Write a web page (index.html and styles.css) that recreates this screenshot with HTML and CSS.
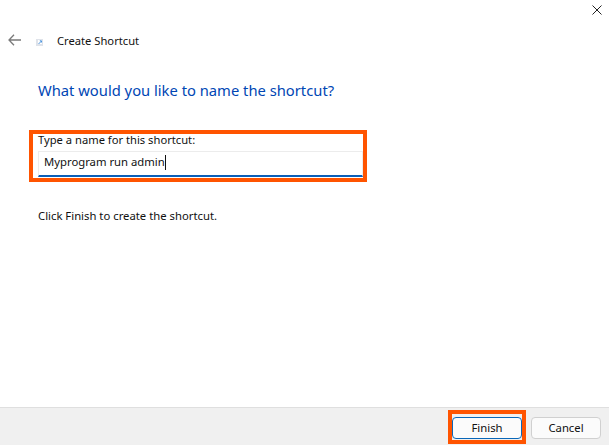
FILE: index.html
```html
<!DOCTYPE html>
<html lang="en">
<head>
<meta charset="utf-8">
<title>Create Shortcut</title>
<link rel="stylesheet" href="styles.css">
</head>
<body>
<div class="window">
  <div class="titlebar">
    <svg class="close" width="10" height="10" viewBox="0 0 10 10"><path d="M.5.5l9 9M9.500.5l-9 9" stroke="#222" stroke-width="1" fill="none"/></svg>
  </div>
  <div class="nav">
    <svg class="back" width="13" height="12" viewBox="0 0 13 12"><path d="M6 .8L1 6l5 5.200M1 6h12" stroke="#7a7a7a" stroke-width="1.300" fill="none"/></svg>
    <svg class="app-icon" width="7" height="7" viewBox="0 0 7 7"><rect width="7" height="7" fill="#dfe3ea"/><rect x="2" y="1" width="4" height="4" fill="#fff"/><path d="M2.500 5L5.500 2M3.800 1.800H5.500V3.500" stroke="#4a93dc" stroke-width="1" fill="none"/></svg>
    <span class="nav-title">Create Shortcut</span>
  </div>
  <main class="content">
    <h1 class="heading">What would you like to name the shortcut?</h1>
    <div class="field">
      <label class="label" for="name">Type a name for this shortcut:</label>
      <div class="input"><span class="value">Myprogram run admin</span><span class="caret"></span></div>
      <div class="mark mark-field"></div>
    </div>
    <p class="hint">Click Finish to create the shortcut.</p>
  </main>
  <footer class="footer">
    <div class="btn-wrap">
      <button class="btn btn-primary">Finish</button>
      <div class="mark mark-btn"></div>
    </div>
    <button class="btn">Cancel</button>
  </footer>
</div>
</body>
</html>
```
FILE: styles.css
```css
* { box-sizing: border-box; }
html, body { margin: 0; padding: 0; }
body { font-family: "Noto Sans", "Open Sans", sans-serif; color: #111; background: #fff; }
.window { width: 609px; height: 445px; display: flex; flex-direction: column; overflow: hidden; }
.titlebar { height: 31px; display: flex; justify-content: flex-end; padding: 5px 7px 0 0; }
.close { display: block; }
.nav { height: 20px; display: flex; align-items: center; padding-left: 8px; }
.back { display: block; margin-top: -2px; }
.app-icon { display: block; margin: 3px 0 0 15px; }
.nav-title { font-size: 11.200px; line-height: 20px; margin-left: 14px; }
.content { flex: 1; padding: 0 0 0 38px; }
.heading { margin: 27px 0 0; font-size: 14.750px; line-height: 24px; font-weight: 400; color: #0046b4; white-space: nowrap; }
.field { position: relative; width: 325px; margin-top: 30px; }
.label { display: block; font-size: 11.200px; line-height: 16px; margin-bottom: 3px; }
.input { height: 26px; padding: 0 0 3px 5px; display: flex; align-items: center; border: 1px solid #ececec; border-bottom: 2px solid #0a5fb8; background: #fff; }
.value { font-size: 11.300px; line-height: 20px; }
.caret { width: 1px; height: 15px; background: #111; }
.mark { position: absolute; border: 4px solid #ff5400; pointer-events: none; }
.mark-field { left: -9px; top: -2px; width: 338px; height: 52px; }
.hint { margin: 31px 0 0; font-size: 11.300px; line-height: 16px; }
.footer { height: 38px; display: flex; justify-content: flex-end; align-items: flex-start; gap: 9px; padding: 9px 8px 0 0; background: #f0f0f0; border-top: 1px solid #dfdfdf; }
.btn-wrap { position: relative; display: flex; }
.btn { width: 70px; height: 22px; padding: 0; font-family: inherit; font-size: 11.300px; line-height: 18px; color: #111; background: #fbfbfb; border: 1px solid #d0d0d0; border-radius: 4px; }
.btn-primary { border-color: #0a67b8; }
.mark-btn { left: -4px; top: -7px; width: 78px; height: 34px; }
```
